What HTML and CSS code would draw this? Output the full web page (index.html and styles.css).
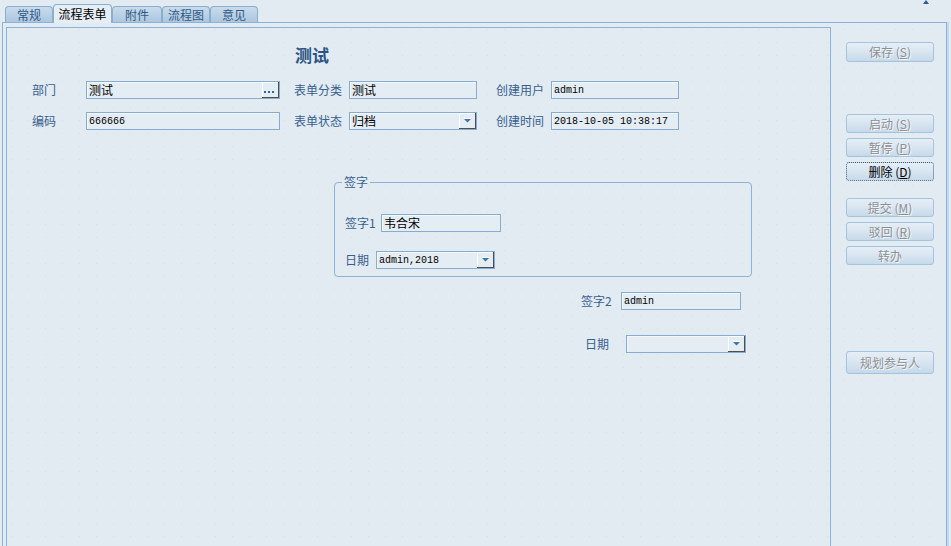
FILE: index.html
```html
<!DOCTYPE html>
<html lang="zh-CN">
<head>
<meta charset="utf-8">
<title>流程表单</title>
<link rel="stylesheet" href="styles.css">
</head>
<body>
<div class="tabbar">
  <div class="tab">常规</div>
  <div class="tab active">流程表单</div>
  <div class="tab wide">附件</div>
  <div class="tab">流程图</div>
  <div class="tab">意见</div>
  <span class="corner-arrow"></span>
</div>
<div class="frame">
  <div class="form">
    <h1 class="title">测试</h1>
    <div class="grid">
      <span class="lbl">部门</span>
      <div class="input lookup"><span class="val">测试</span><span class="btn-dots"><svg width="12" height="3" viewBox="0 0 12 3"><rect x="0" y="0" width="2" height="2" fill="#2f63a8"/><rect x="4" y="0" width="2" height="2" fill="#2f63a8"/><rect x="8" y="0" width="2" height="2" fill="#2f63a8"/></svg></span></div>
      <span class="lbl">表单分类</span>
      <div class="input"><span class="val">测试</span></div>
      <span class="lbl">创建用户</span>
      <div class="input"><span class="val mono">admin</span></div>

      <span class="lbl">编码</span>
      <div class="input"><span class="val mono">666666</span></div>
      <span class="lbl">表单状态</span>
      <div class="input select"><span class="val">归档</span><span class="btn-arrow"><svg width="9" height="5" viewBox="0 0 9 5"><polygon points="1,1 8,1 4.5,4.5" fill="#3f73ad"/><line x1="1" y1="0.5" x2="8" y2="0.5" stroke="#ffffff" stroke-width="1"/></svg></span></div>
      <span class="lbl">创建时间</span>
      <div class="input"><span class="val mono">2018-10-05 10:38:17</span></div>
    </div>

    <fieldset class="sign">
      <legend>签字</legend>
      <div class="srow first">
        <span class="lbl l36">签字1</span>
        <div class="input w120"><span class="val">韦合宋</span></div>
      </div>
      <div class="srow second">
        <span class="lbl l31">日期</span>
        <div class="input select w119"><span class="val mono">admin,2018</span><span class="btn-arrow"><svg width="9" height="5" viewBox="0 0 9 5"><polygon points="1,1 8,1 4.5,4.5" fill="#3f73ad"/><line x1="1" y1="0.5" x2="8" y2="0.5" stroke="#ffffff" stroke-width="1"/></svg></span></div>
      </div>
    </fieldset>

    <div class="srow sign2">
      <span class="lbl l40">签字2</span>
      <div class="input w120"><span class="val mono">admin</span></div>
    </div>
    <div class="srow date2">
      <span class="lbl l41">日期</span>
      <div class="input select w120"><span class="val"></span><span class="btn-arrow"><svg width="9" height="5" viewBox="0 0 9 5"><polygon points="1,1 8,1 4.5,4.5" fill="#3f73ad"/><line x1="1" y1="0.5" x2="8" y2="0.5" stroke="#ffffff" stroke-width="1"/></svg></span></div>
    </div>
  </div>

  <div class="side">
    <button class="btn save" disabled>保存 (<u>S</u>)</button>
    <div class="group g1">
      <button class="btn" disabled>启动 (<u>S</u>)</button>
      <button class="btn" disabled>暂停 (<u>P</u>)</button>
      <button class="btn focus">删除 (<u>D</u>)</button>
    </div>
    <div class="group g2">
      <button class="btn" disabled>提交 (<u>M</u>)</button>
      <button class="btn" disabled>驳回 (<u>R</u>)</button>
      <button class="btn" disabled>转办</button>
    </div>
    <button class="btn tall" disabled>规划参与人</button>
  </div>
</div>
</body>
</html>
```

FILE: styles.css
```css
html, body {
  height: 546px;
  overflow: hidden;
}
body {
  margin: 0;
  background-color: #e2eaf2;
  font-family: "Noto Sans CJK SC", "Noto Sans", sans-serif;
  font-size: 12px;
  color: #36618e;
}

.tabbar {
  height: 22px;
  display: flex;
  align-items: flex-end;
  padding-left: 5px;
  box-sizing: border-box;
}
.tab {
  width: 48px;
  height: 16px;
  box-sizing: border-box;
  border: 1px solid #8aaecd;
  border-bottom: none;
  border-radius: 4px 4px 0 0;
  background: linear-gradient(#c9dbeb, #acc7df);
  color: #2f5a86;
  text-align: center;
  line-height: 15px;
}
.tab.wide { width: 50px; }
.tab.active {
  width: 59px;
  height: 19px;
  margin-bottom: -1px;
  background: #e6eef5;
  color: #000;
  line-height: 17px;
  position: relative;
  z-index: 1;
}
.corner-arrow {
  align-self: flex-start;
  margin-left: auto;
  margin-right: 22px;
  width: 0;
  height: 0;
  border-left: 3px solid transparent;
  border-right: 3px solid transparent;
  border-bottom: 4px solid #2c5d94;
}

.frame {
  margin-left: 2px;
  width: 945px;
  height: 524px;
  box-sizing: border-box;
  border: 1px solid #8cb2d5;
  border-bottom: none;
  box-shadow: 2px 0 0 #c5d9eb;
  display: flex;
  padding: 4px 0 0 3px;
  background-image: radial-gradient(circle, #d5e0eb 0.6px, transparent 1px);
  background-size: 17px 13px;
}

.form {
  width: 825px;
  flex: none;
  height: 519px;
  box-sizing: border-box;
  border: 1px solid #8cb2d5;
  border-bottom: none;
  padding-left: 25px;
}
.title {
  margin: 17px 0 0 263px;
  font-size: 17px;
  line-height: 20px;
  font-weight: bold;
  color: #2a5584;
}

.grid {
  margin-top: 16px;
  display: grid;
  grid-template-columns: 54px 208px 55px 147px 55px 128px;
  grid-auto-rows: 18px;
  row-gap: 13px;
  align-items: center;
}
.grid .input { width: 194px; }
.grid .input:nth-child(4),
.grid .input:nth-child(10),
.grid .input:nth-child(6),
.grid .input:nth-child(12) { width: 128px; }

.lbl {
  white-space: nowrap;
  line-height: 18px;
  color: #36618e;
}

.input {
  height: 18px;
  box-sizing: border-box;
  border: 1px solid #86acd0;
  background: #e5edf4;
  box-shadow: inset 1px 1px 0 #f3f7fa;
  display: flex;
  align-items: stretch;
  color: #000;
}
.val {
  flex: 1;
  padding-left: 2px;
  line-height: 16px;
  white-space: nowrap;
  overflow: hidden;
}
.mono {
  font-family: "Liberation Mono", "DejaVu Sans Mono", monospace;
  font-size: 10px;
  line-height: 17px;
}
.btn-dots, .btn-arrow {
  width: 17px;
  flex: none;
  box-sizing: border-box;
  border-right: 1px solid #4f4f4f;
  border-bottom: 1px solid #4f4f4f;
  box-shadow: inset 1px 1px 0 #ffffff;
  display: flex;
  align-items: center;
  justify-content: center;
}
.btn-dots { padding-top: 5px; }

.w120 { width: 120px; }
.w119 { width: 119px; }
.l36 { width: 36px; }
.l31 { width: 31px; }
.l40 { width: 40px; }
.l41 { width: 41px; }

.srow {
  display: flex;
  align-items: center;
}

.sign {
  margin: 45px 0 0 302px;
  width: 418px;
  box-sizing: border-box;
  min-width: 0;
  padding: 0 0 7px 0;
  border: 1px solid #8cb2d5;
  border-radius: 4px;
}
.sign legend {
  margin-left: 7px;
  padding: 0 2px;
  line-height: 14px;
  color: #36618e;
}
.sign .first { margin-top: 25px; padding-left: 10px; }
.sign .second { margin-top: 19px; padding-left: 10px; }

.sign2 { margin-top: 15px; padding-left: 549px; }
.date2 { margin-top: 25px; padding-left: 553px; }

.side {
  display: flex;
  flex-direction: column;
  align-items: flex-start;
  padding-left: 15px;
}
.btn {
  width: 88px;
  height: 19px;
  padding: 0;
  box-sizing: border-box;
  border: 1px solid #a4c3dc;
  border-radius: 3px;
  background: linear-gradient(#e6eef6, #d8e5f0 50%, #c7d9e9);
  font-family: "Noto Sans CJK SC", "Noto Sans", sans-serif;
  font-size: 12px;
  line-height: 16px;
  color: #8d8f92;
  text-shadow: 1px 1px 0 #f4f7fa;
}
.btn u { text-decoration-thickness: 1px; }
.btn.save { margin-top: 15px; height: 20px; }
.btn.focus {
  color: #000;
  text-shadow: none;
  border: 1px dotted #3d5f86;
}
.group {
  display: flex;
  flex-direction: column;
  gap: 5px;
}
.g1 { margin-top: 52px; }
.g2 { margin-top: 17px; }
.btn.tall { margin-top: 86px; height: 23px; }
```
